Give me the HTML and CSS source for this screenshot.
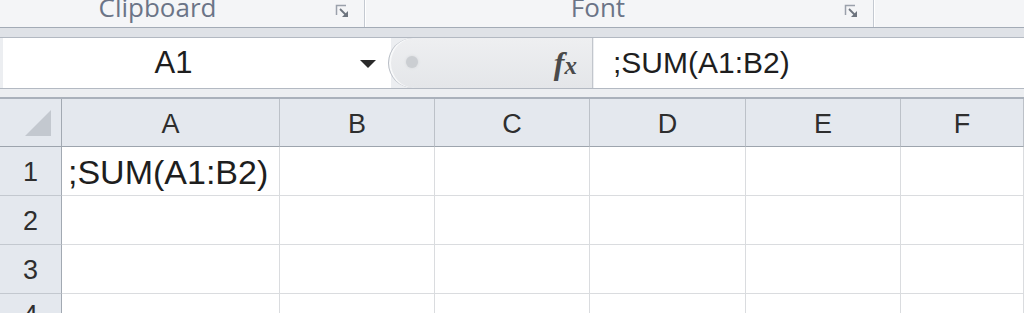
FILE: index.html
```html
<!DOCTYPE html>
<html>
    <head>
        <meta charset="utf-8">
        <title>Planilha</title>
        <link rel="stylesheet" href="styles.css">
    </head>
    <body>
        <div class="ribbon">
            <div class="group group-clip">
                <span class="group-label">Clipboard</span>
                <svg class="launcher" width="14" height="14" viewBox="0 0 14 14">
                    <path d="M1.5 11 V1.5 H11" fill="none" stroke="#9aa1ab" stroke-width="1.5"/>
                    <path d="M5 5 L11 11" stroke="#6d747e" stroke-width="1.8"/>
                    <polygon points="13,13 13,7 7,13" fill="#6d747e"/>
                </svg>
            </div>
            <div class="group group-font">
                <span class="group-label">Font</span>
                <svg class="launcher" width="14" height="14" viewBox="0 0 14 14">
                    <path d="M1.5 11 V1.5 H11" fill="none" stroke="#9aa1ab" stroke-width="1.5"/>
                    <path d="M5 5 L11 11" stroke="#6d747e" stroke-width="1.8"/>
                    <polygon points="13,13 13,7 7,13" fill="#6d747e"/>
                </svg>
            </div>
            <div class="group group-rest"></div>
        </div>
        <div class="ribbon-gap"></div>

        <div class="formula-bar">
            <div class="name-box">
                <span class="name-value">A1</span>
                <span class="name-arrow"></span>
            </div>
            <div class="fx-area">
                <span class="fx-knob"></span>
                <span class="fx">f<span class="fx-x">x</span></span>
            </div>
            <div class="formula-input">;SUM(A1:B2)</div>
        </div>
        <div class="bar-gap"></div>

        <div class="sheet">
            <div class="corner">
                <svg width="26" height="26" viewBox="0 0 26 26">
                    <polygon points="26,0 26,26 0,26" fill="#c3c8cf"/>
                </svg>
            </div>
            <div class="col-head">A</div>
            <div class="col-head">B</div>
            <div class="col-head">C</div>
            <div class="col-head">D</div>
            <div class="col-head">E</div>
            <div class="col-head">F</div>

            <div class="row-head">1</div>
            <div class="cell">;SUM(A1:B2)</div>
            <div class="cell"></div>
            <div class="cell"></div>
            <div class="cell"></div>
            <div class="cell"></div>
            <div class="cell"></div>

            <div class="row-head">2</div>
            <div class="cell"></div>
            <div class="cell"></div>
            <div class="cell"></div>
            <div class="cell"></div>
            <div class="cell"></div>
            <div class="cell"></div>

            <div class="row-head">3</div>
            <div class="cell"></div>
            <div class="cell"></div>
            <div class="cell"></div>
            <div class="cell"></div>
            <div class="cell"></div>
            <div class="cell"></div>

            <div class="row-head row-head-cut">4</div>
            <div class="cell"></div>
            <div class="cell"></div>
            <div class="cell"></div>
            <div class="cell"></div>
            <div class="cell"></div>
            <div class="cell"></div>
        </div>
    </body>
</html>
```

FILE: styles.css
```css
* {
    box-sizing: border-box;
}
body {
    margin: 0;
    width: 1024px;
    height: 313px;
    overflow: hidden;
    background: #ffffff;
    font-family: "Liberation Sans", Arial, sans-serif;
}

/* faixa da ribbon */
.ribbon {
    display: flex;
    height: 28px;
    background: #f4f5f7;
    border-bottom: 1px solid #a3abb6;
    overflow: hidden;
}
.group {
    display: flex;
    align-items: flex-start;
    height: 27px;
    border-right: 1px solid #c4c9d1;
    box-shadow: 1px 0 0 #ffffff;
}
.group-clip {
    width: 365px;
}
.group-font {
    width: 508px;
    margin-left: 1px;
}
.group-rest {
    flex: 1;
    border-right: none;
    box-shadow: none;
}
.group-label {
    flex: 1;
    text-align: center;
    font-family: "Open Sans", sans-serif;
    font-size: 26px;
    line-height: 26px;
    margin-top: -6px;
    color: #6b7487;
}
.group-clip .group-label {
    padding-right: 20px;
}
.group-font .group-label {
    padding-right: 14px;
}
.launcher {
    margin-top: 4px;
    margin-right: 15px;
}
.ribbon-gap {
    height: 9px;
    background: #dfe2e7;
}

/* barra de formulas */
.formula-bar {
    display: flex;
    height: 52px;
    background: #eceef1;
    border-top: 1px solid #b3b9c2;
    border-bottom: 1px solid #b3b9c2;
}
.name-box {
    display: flex;
    align-items: center;
    width: 388px;
    margin-left: 3px;
    background: #ffffff;
}
.name-value {
    flex: 1;
    padding-right: 4px;
    text-align: center;
    font-size: 31px;
    color: #1e1e1e;
}
.name-arrow {
    width: 0;
    height: 0;
    border-left: 8px solid transparent;
    border-right: 8px solid transparent;
    border-top: 8px solid #2a2a2a;
    margin: 2px 15px 0 12px;
}
.fx-area {
    display: flex;
    align-items: center;
    justify-content: space-between;
    width: 205px;
    margin-left: -3px;
    background: linear-gradient(#eeeff1, #e4e6e9);
    border-left: 1px solid #b7bcc4;
    border-right: 1px solid #c2c6cc;
    border-radius: 26px 0 0 26px;
    box-shadow: inset 2px 0 0 #f8f9fa;
}
.fx-knob {
    width: 12px;
    height: 12px;
    margin-left: 17px;
    margin-top: -3px;
    border-radius: 50%;
    background: #cbced2;
    box-shadow: 0 0 3px #d4d7da;
}
.fx {
    margin-right: 15px;
    font-family: "Liberation Serif", serif;
    font-style: italic;
    font-weight: bold;
    font-size: 32px;
    color: #4a4a4a;
}
.fx-x {
    font-size: 25px;
}
.formula-input {
    flex: 1;
    display: flex;
    align-items: center;
    margin-left: 1px;
    padding-left: 19px;
    background: #ffffff;
    font-size: 30px;
    color: #1e1e1e;
}
.bar-gap {
    height: 10px;
    background: #eceef1;
    border-bottom: 2px solid #aab1bb;
}

/* grade */
.sheet {
    display: grid;
    grid-template-columns: 62px 218px 155px 155px 156px 155px 1fr;
    grid-template-rows: 48px 49px 49px 49px 21px;
    overflow: hidden;
}
.corner,
.col-head,
.row-head {
    background: #e4e8ee;
    color: #2e2e2e;
    font-size: 27px;
}
.corner {
    display: flex;
    align-items: flex-end;
    justify-content: flex-end;
    padding: 0 10px 10px 0;
    border-right: 1px solid #a2a9b2;
    border-bottom: 1px solid #9da4ad;
}
.col-head {
    display: flex;
    align-items: center;
    justify-content: center;
    padding-top: 4px;
    border-right: 1px solid #bcc1c8;
    border-bottom: 1px solid #9da4ad;
}
.row-head {
    display: flex;
    align-items: center;
    justify-content: center;
    padding-top: 2px;
    border-right: 1px solid #a2a9b2;
    border-bottom: 1px solid #c3c8cf;
    overflow: hidden;
}
.row-head-cut {
    align-items: flex-start;
    padding-top: 6px;
    border-bottom: none;
}
.cell {
    display: flex;
    align-items: center;
    padding: 2px 0 0 6px;
    border-right: 1px solid #dadcdf;
    border-bottom: 1px solid #dadcdf;
    font-size: 34px;
    color: #1e1e1e;
    white-space: nowrap;
}
```
